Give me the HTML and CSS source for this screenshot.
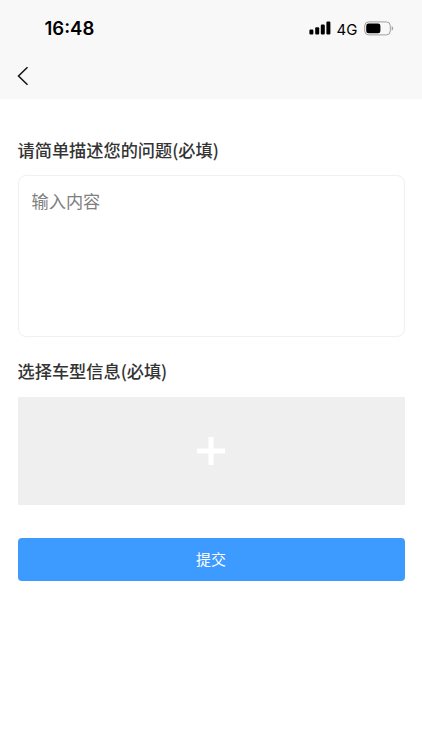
FILE: index.html
```html
<!DOCTYPE html>
<html lang="zh-CN">
<head>
<meta charset="utf-8">
<meta name="viewport" content="width=device-width, initial-scale=1">
<title>问题反馈</title>
<link rel="stylesheet" href="styles.css">
</head>
<body>
<header class="header">
  <div class="status">
    <span class="time">16:48</span>
    <div class="indicators">
      <svg class="signal" width="22" height="14" viewBox="0 0 22 14">
        <rect x="0.4" y="8.6" width="4" height="5" rx="1.1"/>
        <rect x="6.2" y="6.2" width="4" height="7.4" rx="1.1"/>
        <rect x="11.8" y="3.6" width="4" height="10" rx="1.1"/>
        <rect x="17.4" y="0.6" width="4" height="13" rx="1.1"/>
      </svg>
      <span class="network">4G</span>
      <svg class="battery" width="30" height="15" viewBox="0 0 30 15">
        <rect x="0.7" y="0.9" width="25.6" height="13" rx="4" fill="none" stroke="#a0a0a0"/>
        <rect x="2.2" y="2.5" width="14.2" height="9.8" rx="2.4"/>
        <path d="M27.7 5.1c2 .9 2 3.7 0 4.6z" fill="#a0a0a0"/>
      </svg>
    </div>
  </div>
  <nav class="nav">
    <svg class="back" width="12" height="20" viewBox="0 0 12 20">
      <path d="M10.5 1.2 1.5 10l9 8.8" fill="none" stroke="#111" stroke-width="1.5"/>
    </svg>
  </nav>
</header>
<main class="form">
  <h2 class="label">请简单描述您的问题(必填)</h2>
  <textarea class="input" placeholder="输入内容"></textarea>
  <h2 class="label label-model">选择车型信息(必填)</h2>
  <div class="picker">
    <svg width="30" height="30" viewBox="0 0 30 30">
      <path d="M15 .9v28.2M.9 15h28.2" stroke="#fff" stroke-width="5"/>
    </svg>
  </div>
  <button class="submit">提交</button>
</main>
</body>
</html>
```
FILE: styles.css
```css
* {
  box-sizing: border-box;
}

body {
  margin: 0;
  min-height: 750px;
  background: #fff;
  font-family: "Noto Sans CJK SC", sans-serif;
}

svg {
  display: block;
}

.header {
  height: 98.5px;
  background: #f8f8f8;
}

.status {
  display: flex;
  justify-content: space-between;
  height: 56px;
  padding: 0 28px 0 44.5px;
  align-items: center;
}

.time {
  font: 600 18.5px/22px Inter, sans-serif;
  color: #000;
}

.indicators {
  display: flex;
  align-items: center;
}

.network {
  margin: 3px 6.5px 0 6px;
  font: 400 15px/20px Inter, sans-serif;
}

.nav {
  padding: 9.5px 0 0 17px;
}

.form {
  padding: 38px 17.5px 0;
}

.label {
  margin: 0;
  font-size: 17.2px;
  font-weight: 500;
  line-height: 26px;
  color: #333;
}

.input {
  display: block;
  width: 100%;
  height: 162px;
  margin: 12.5px 0 0;
  padding: 12px 13px;
  border: 1.5px solid #f0f0f0;
  border-radius: 8px;
  outline: none;
  resize: none;
  font: 400 17.2px/26px "Noto Sans CJK SC", sans-serif;
}

.input::placeholder {
  color: #808080;
}

.label-model {
  margin-top: 21px;
}

.picker {
  display: flex;
  align-items: center;
  justify-content: center;
  height: 108px;
  margin-top: 13px;
  background: #efefef;
}

.submit {
  display: block;
  width: 100%;
  height: 43px;
  margin-top: 32.5px;
  padding: 0 0 2px;
  border: 0;
  border-radius: 4px;
  background: #3d9bff;
  color: #fff;
  font: 400 15px/41px "Noto Sans CJK SC", sans-serif;
}
```
